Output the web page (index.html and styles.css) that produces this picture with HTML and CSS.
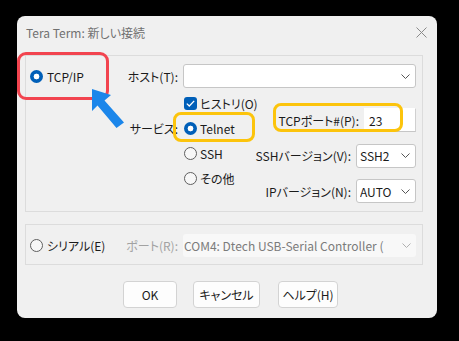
FILE: index.html
```html
<!DOCTYPE html>
<html lang="ja">
<head>
  <meta charset="UTF-8">
  <title>Tera Term: 新しい接続</title>
  <link rel="stylesheet" href="styles.css">
</head>
<body>
  <div class="dialog">
    <div class="titlebar">
      <span class="title">Tera Term: 新しい接続</span>
      <svg class="close" width="11" height="11" viewBox="0 0 11 11"><path d="M0.5 0.5 L10.5 10.5 M10.5 0.5 L0.5 10.5" stroke="#8a8a8a" stroke-width="1"/></svg>
    </div>

    <div class="content">
      <div class="group tcp-group">
        <div class="cell head-left">
          <label class="radio-item"><span class="radio on"></span>TCP/IP</label>
          <span class="field-label">ホスト(T):</span>
        </div>
        <div class="cell">
          <div class="combo host"><span></span><svg class="chev" width="9" height="5" viewBox="0 0 9 5"><path d="M0.5 0.5 L4.5 4.5 L8.5 0.5" fill="none" stroke="#555" stroke-width="1"/></svg></div>
        </div>

        <div class="cell service-label">サービス:</div>
        <div class="cell body-right">
          <div class="choices">
            <label class="choice"><span class="check"><svg width="9" height="7" viewBox="0 0 9 7"><path d="M0.8 3.6 L3.3 6 L8.2 0.9" fill="none" stroke="#fff" stroke-width="1.3"/></svg></span>ヒストリ(O)</label>
            <label class="choice"><span class="radio on"></span>Telnet</label>
            <label class="choice"><span class="radio"></span>SSH</label>
            <label class="choice"><span class="radio"></span>その他</label>
          </div>
          <div class="options">
            <div class="opt-row">
              <span class="field-label">TCPポート#(P):</span>
              <div class="textbox port">23</div>
            </div>
            <div class="opt-row">
              <span class="field-label">SSHバージョン(V):</span>
              <div class="combo small"><span>SSH2</span><svg class="chev" width="9" height="5" viewBox="0 0 9 5"><path d="M0.5 0.5 L4.5 4.5 L8.5 0.5" fill="none" stroke="#555" stroke-width="1"/></svg></div>
            </div>
            <div class="opt-row">
              <span class="field-label">IPバージョン(N):</span>
              <div class="combo small"><span>AUTO</span><svg class="chev" width="9" height="5" viewBox="0 0 9 5"><path d="M0.5 0.5 L4.5 4.5 L8.5 0.5" fill="none" stroke="#555" stroke-width="1"/></svg></div>
            </div>
          </div>
        </div>
      </div>

      <div class="group serial-group">
        <div class="cell head-left">
          <label class="radio-item"><span class="radio"></span>シリアル(E)</label>
          <span class="field-label disabled">ポート(R):</span>
        </div>
        <div class="cell">
          <div class="combo com"><span>COM4: Dtech USB-Serial Controller (</span><svg class="chev" width="9" height="5" viewBox="0 0 9 5"><path d="M0.5 0.5 L4.5 4.5 L8.5 0.5" fill="none" stroke="#b0b0b0" stroke-width="1"/></svg></div>
        </div>
      </div>

      <div class="buttons">
        <button class="btn ok">OK</button>
        <button class="btn cancel">キャンセル</button>
        <button class="btn help">ヘルプ(H)</button>
      </div>
    </div>
  </div>

  <!-- annotations drawn over the screenshot -->
  <div class="mark red-mark"></div>
  <div class="mark yellow-mark telnet-mark"></div>
  <div class="mark yellow-mark port-mark"></div>
  <svg class="arrow" width="459" height="341" viewBox="0 0 459 341">
    <polygon points="92,89 111,95 104.5,100.5 124,122.5 116.5,128 97.5,105.5 92,111" fill="#1b86ea"/>
  </svg>
</body>
</html>
```

FILE: styles.css
```css
body { margin: 0; background: #000; font-family: "Noto Sans CJK JP", "Noto Sans", sans-serif; font-size: 12px; color: #1b1b1b; font-feature-settings: "palt" 1; position: relative; width: 459px; height: 341px; overflow: hidden; }

.dialog { margin: 16px 0 0 17px; width: 420px; height: 302px; background: #f0f0f0; border-radius: 8px; }
.titlebar { height: 32px; display: flex; align-items: center; justify-content: space-between; padding: 0 10px 0 9px; }
.title { color: #707070; font-size: 12px; }
.close { display: block; }

.content { padding: 7px 14px 0 8px; }
.group { border: 1px solid #dcdcdc; display: grid; grid-template-columns: 152px 1fr; column-gap: 5px; }
.tcp-group { padding: 8px 6px 8px 0; }
.serial-group { margin-top: 12px; padding: 9px 6px 7px 0; }

.cell { min-width: 0; }
.head-left { display: flex; align-items: center; justify-content: space-between; padding-left: 4px; height: 24px; }
.serial-group .head-left { height: 23px; }
.radio-item { display: flex; align-items: center; gap: 4px; white-space: nowrap; }
.field-label { white-space: nowrap; }
.field-label.disabled { color: #a2a2a2; }

.radio { display: inline-block; box-sizing: border-box; width: 13px; height: 13px; border-radius: 50%; border: 1px solid #5f5f5f; background: #f7f7f7; flex: none; }
.radio.on { border: none; background: radial-gradient(circle, #fff 0 2.6px, #005fb8 3.2px); }
.check { display: flex; align-items: center; justify-content: center; width: 13px; height: 13px; border-radius: 3px; background: #005fb8; flex: none; }

.combo, .textbox { box-sizing: border-box; background: #fff; border: 1px solid #c6c6c6; border-radius: 3px; display: flex; align-items: center; }
.combo span { flex: 1; overflow: hidden; white-space: nowrap; }
.chev { display: block; margin: 0 5px 0 4px; flex: none; }
.host { height: 24px; }
.small { width: 60px; height: 24px; padding-left: 3px; flex: none; }
.textbox { height: 24px; padding-left: 4px; }
.port { width: 52px; flex: none; border-color: #fff #d0d0d0 #c6c6c6 #fff; border-radius: 0; }
.com { height: 23px; background: #f8f8f8; border: none; color: #7b7b7b; padding-left: 1px; }

.service-label { text-align: right; padding-top: 28px; line-height: 25px; white-space: nowrap; }
.body-right { display: flex; }
.choices { width: 72px; flex: none; padding: 3px 0 0 1px; }
.choice { display: flex; align-items: center; gap: 3px; height: 25px; white-space: nowrap; }
.options { flex: 1; min-width: 0; display: flex; flex-direction: column; gap: 11.5px; padding-top: 20px; }
.opt-row { display: flex; align-items: center; justify-content: flex-end; gap: 5px; }

.buttons { display: flex; gap: 16px; margin-top: 16px; padding-left: 98px; }
.btn { box-sizing: border-box; height: 27px; background: #fdfdfd; border: 1px solid #d3d3d3; border-radius: 4px; font: inherit; color: #1b1b1b; padding: 0; }
.ok { width: 54px; }
.cancel { width: 67px; }
.help { width: 60px; margin-left: 2px; }

.mark { position: absolute; box-sizing: border-box; border-radius: 8px; }
.red-mark { left: 17px; top: 52px; width: 92px; height: 48px; border: 3px solid #f2444f; border-radius: 9px; }
.yellow-mark { border: 3px solid #fcc40c; }
.telnet-mark { left: 173px; top: 112px; width: 82px; height: 30px; }
.port-mark { left: 273px; top: 103px; width: 130px; height: 29px; }
.arrow { position: absolute; left: 0; top: 0; }
```
